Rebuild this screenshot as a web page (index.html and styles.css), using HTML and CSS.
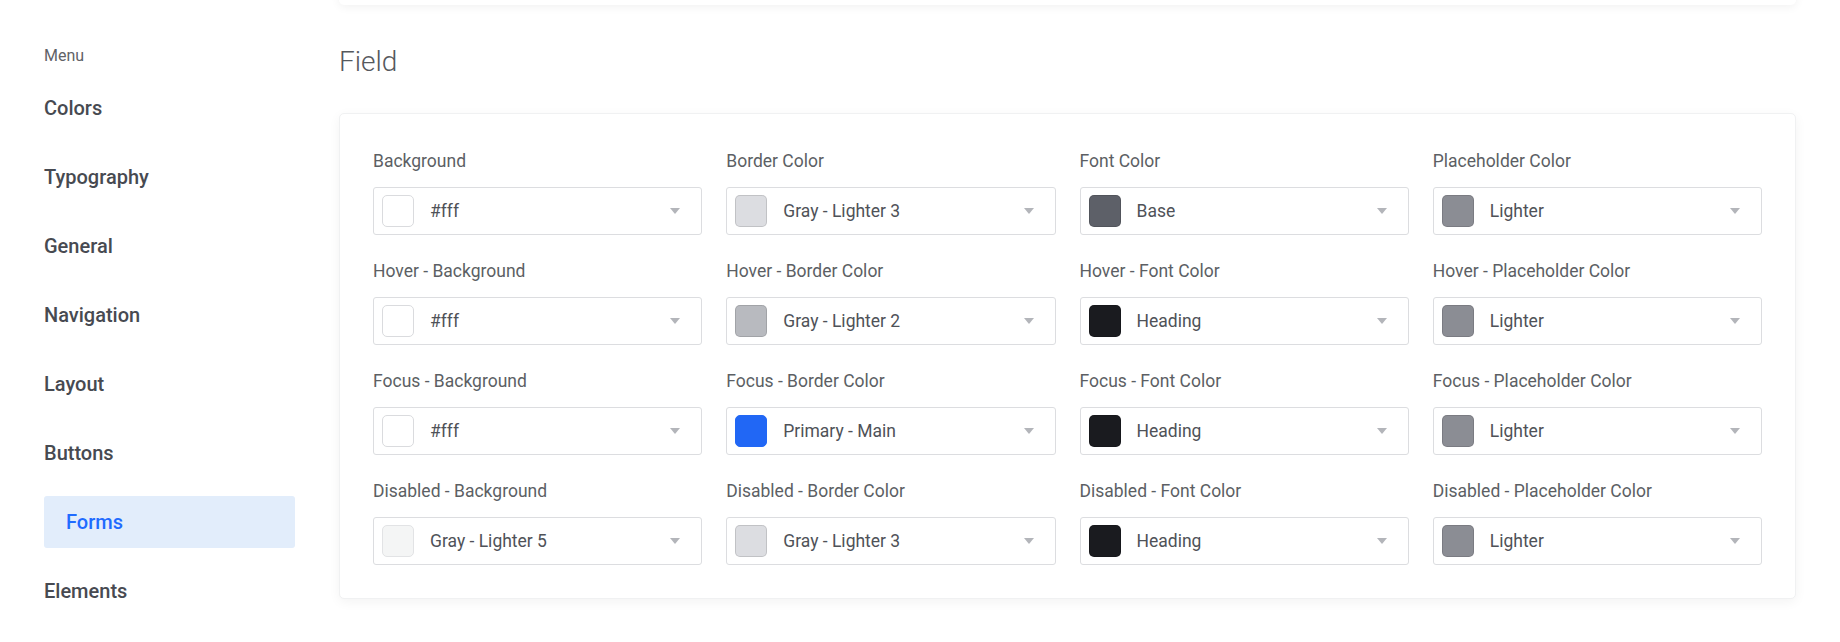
FILE: index.html
```html
<!DOCTYPE html>
<html lang="en">
<head>
<meta charset="utf-8">
<title>Forms - Field</title>
<link rel="stylesheet" href="styles.css">
</head>
<body>
<div class="page">
  <aside class="sidebar">
    <div class="menu-title">Menu</div>
    <nav class="nav">
      <a class="nav-item">Colors</a>
      <a class="nav-item">Typography</a>
      <a class="nav-item">General</a>
      <a class="nav-item">Navigation</a>
      <a class="nav-item">Layout</a>
      <a class="nav-item">Buttons</a>
      <a class="nav-item active">Forms</a>
      <a class="nav-item">Elements</a>
    </nav>
  </aside>
  <main class="main">
    <div class="prev-card"></div>
    <h2 class="section-title">Field</h2>
    <section class="card">
      <div class="grid">
        <div class="field"><div class="label">Background</div><div class="select"><span class="swatch sw-white"></span><span class="value">#fff</span><span class="caret"></span></div></div>
        <div class="field"><div class="label">Border Color</div><div class="select"><span class="swatch sw-gray3"></span><span class="value">Gray - Lighter 3</span><span class="caret"></span></div></div>
        <div class="field"><div class="label">Font Color</div><div class="select"><span class="swatch sw-base"></span><span class="value">Base</span><span class="caret"></span></div></div>
        <div class="field"><div class="label">Placeholder Color</div><div class="select"><span class="swatch sw-lighter"></span><span class="value">Lighter</span><span class="caret"></span></div></div>

        <div class="field"><div class="label">Hover - Background</div><div class="select"><span class="swatch sw-white"></span><span class="value">#fff</span><span class="caret"></span></div></div>
        <div class="field"><div class="label">Hover - Border Color</div><div class="select"><span class="swatch sw-gray2"></span><span class="value">Gray - Lighter 2</span><span class="caret"></span></div></div>
        <div class="field"><div class="label">Hover - Font Color</div><div class="select"><span class="swatch sw-heading"></span><span class="value">Heading</span><span class="caret"></span></div></div>
        <div class="field"><div class="label">Hover - Placeholder Color</div><div class="select"><span class="swatch sw-lighter"></span><span class="value">Lighter</span><span class="caret"></span></div></div>

        <div class="field"><div class="label">Focus - Background</div><div class="select"><span class="swatch sw-white"></span><span class="value">#fff</span><span class="caret"></span></div></div>
        <div class="field"><div class="label">Focus - Border Color</div><div class="select"><span class="swatch sw-primary"></span><span class="value">Primary - Main</span><span class="caret"></span></div></div>
        <div class="field"><div class="label">Focus - Font Color</div><div class="select"><span class="swatch sw-heading"></span><span class="value">Heading</span><span class="caret"></span></div></div>
        <div class="field"><div class="label">Focus - Placeholder Color</div><div class="select"><span class="swatch sw-lighter"></span><span class="value">Lighter</span><span class="caret"></span></div></div>

        <div class="field"><div class="label">Disabled - Background</div><div class="select"><span class="swatch sw-gray5"></span><span class="value">Gray - Lighter 5</span><span class="caret"></span></div></div>
        <div class="field"><div class="label">Disabled - Border Color</div><div class="select"><span class="swatch sw-gray3"></span><span class="value">Gray - Lighter 3</span><span class="caret"></span></div></div>
        <div class="field"><div class="label">Disabled - Font Color</div><div class="select"><span class="swatch sw-heading"></span><span class="value">Heading</span><span class="caret"></span></div></div>
        <div class="field"><div class="label">Disabled - Placeholder Color</div><div class="select"><span class="swatch sw-lighter"></span><span class="value">Lighter</span><span class="caret"></span></div></div>
      </div>
    </section>
  </main>
</div>
</body>
</html>
```

FILE: styles.css
```css
* { box-sizing: border-box; }

html, body {
  margin: 0;
  padding: 0;
  background: #ffffff;
}

body {
  font-family: Roboto, "Liberation Sans", Arial, sans-serif;
  color: #4f5258;
  overflow: hidden;
}

.page {
  display: flex;
  align-items: flex-start;
  width: 1840px;
  height: 642px;
}

/* Sidebar */
.sidebar {
  width: 295px;
  padding-left: 44px;
  padding-top: 46px;
  flex: none;
}

.menu-title {
  font-size: 16px;
  line-height: 20px;
  color: #5f6267;
  margin-bottom: 16px;
}

.nav {
  display: flex;
  flex-direction: column;
  gap: 17px;
}

.nav-item {
  display: block;
  height: 52px;
  line-height: 52px;
  font-size: 20px;
  font-weight: 500;
  color: #474a51;
  text-decoration: none;
  border-radius: 3px;
}

.nav-item.active {
  background: #e2edfb;
  color: #1f6bff;
  padding-left: 22px;
}

/* Main */
.main {
  margin-left: 44px;
  width: 1457px;
  flex: none;
}

.prev-card {
  height: 20px;
  margin-top: -15px;
  background: #ffffff;
  border-radius: 5px;
  box-shadow: 0 2px 10px rgba(0, 0, 0, 0.06);
}

.section-title {
  margin: 40px 0 35px 0;
  font-size: 28px;
  font-weight: 300;
  line-height: 33px;
  color: #55585d;
}

.card {
  background: #ffffff;
  border: 1px solid #f0f1f2;
  border-radius: 5px;
  box-shadow: 0 3px 12px rgba(0, 0, 0, 0.05);
  padding: 35px 33px 33px 33px;
}

.grid {
  display: grid;
  grid-template-columns: repeat(4, 1fr);
  column-gap: 24px;
  row-gap: 24px;
}

.label {
  font-size: 17.5px;
  line-height: 24px;
  color: #5c5f64;
  margin-bottom: 14px;
  white-space: nowrap;
}

.select {
  display: flex;
  align-items: center;
  height: 48px;
  border: 1px solid #dcdde0;
  border-radius: 3px;
  padding: 0 21px 0 8px;
  background: #ffffff;
}

.swatch {
  width: 32px;
  height: 32px;
  flex: none;
  border-radius: 5px;
  border: 1px solid rgba(0, 0, 0, 0.12);
  margin-right: 16px;
}

.sw-white { background: #ffffff; border-color: #dadbde; }
.sw-gray3 { background: #dcdde1; }
.sw-gray2 { background: #b8babf; }
.sw-gray5 { background: #f4f5f5; border-color: #e2e3e5; }
.sw-base { background: #5d6068; }
.sw-lighter { background: #8b8d94; }
.sw-heading { background: #1a1b1f; }
.sw-primary { background: #2167f5; border-color: #2167f5; }

.value {
  flex: 1;
  font-size: 17.5px;
  color: #4f5258;
  white-space: nowrap;
}

.caret {
  width: 0;
  height: 0;
  border-left: 5.5px solid transparent;
  border-right: 5.5px solid transparent;
  border-top: 6px solid #b3b5ba;
  flex: none;
}
```
